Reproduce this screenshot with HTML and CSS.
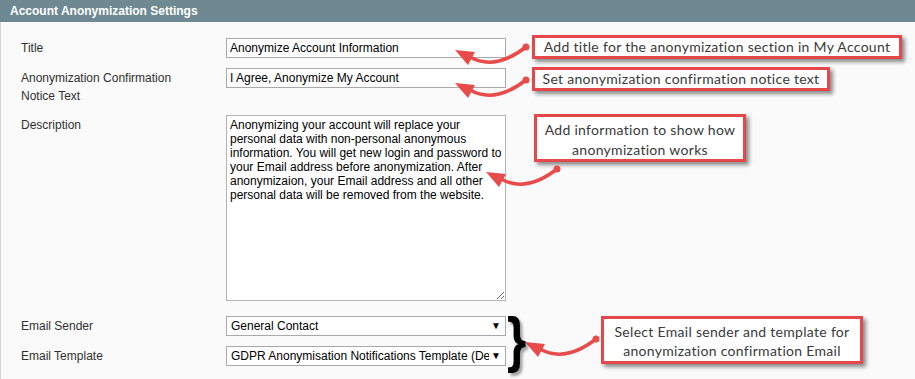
FILE: index.html
```html
<!DOCTYPE html>
<html lang="en">
<head>
  <meta charset="UTF-8" />
  <title>Account Anonymization Settings</title>
  <link rel="stylesheet" href="styles.css">
</head>
<body>

<div class="page">
  <div class="section-head">Account Anonymization Settings</div>

  <div class="section-body">
    <div class="row">
      <label>Title</label>
      <input type="text" class="field" value="Anonymize Account Information" />
    </div>

    <div class="row">
      <label>Anonymization Confirmation Notice Text</label>
      <input type="text" class="field" value="I Agree, Anonymize My Account" />
    </div>

    <div class="row row-area">
      <label>Description</label>
      <textarea class="area">Anonymizing your account will replace your personal data with non-personal anonymous information. You will get new login and password to your Email address before anonymization. After anonymizaion, your Email address and all other personal data will be removed from the website.</textarea>
    </div>

    <div class="row">
      <label>Email Sender</label>
      <div class="select-wrap">
        <select class="select">
          <option>General Contact</option>
        </select>
      </div>
    </div>

    <div class="row">
      <label>Email Template</label>
      <div class="select-wrap">
        <select class="select">
          <option>GDPR Anonymisation Notifications Template (Default)</option>
        </select>
      </div>
    </div>
  </div>

  <!-- Annotations -->
  <div class="callout c1">Add title for the anonymization section in My Account</div>
  <div class="callout c2">Set anonymization confirmation notice text</div>
  <div class="callout c3">Add information to show how<br>anonymization works</div>
  <div class="callout c4">Select Email sender and template for<br>anonymization confirmation Email</div>

  <svg class="arrow a1" width="80" height="30" viewBox="0 0 80 30">
    <path d="M20 17 Q45 31 76 7" fill="none" stroke="#e84c4a" stroke-width="3.5" stroke-linecap="round" />
    <polygon points="5,10 25,12 18,25" fill="#e84c4a" />
    <circle cx="76" cy="7" r="3.5" fill="#e84c4a" />
  </svg>
  <svg class="arrow a2" width="80" height="30" viewBox="0 0 80 30">
    <path d="M20 17 Q45 31 76 7" fill="none" stroke="#e84c4a" stroke-width="3.5" stroke-linecap="round" />
    <polygon points="5,10 25,12 18,25" fill="#e84c4a" />
    <circle cx="76" cy="7" r="3.5" fill="#e84c4a" />
  </svg>
  <svg class="arrow a3" width="80" height="30" viewBox="0 0 80 30">
    <path d="M20 17 Q45 31 76 7" fill="none" stroke="#e84c4a" stroke-width="3.5" stroke-linecap="round" />
    <polygon points="5,10 25,12 18,25" fill="#e84c4a" />
    <circle cx="76" cy="7" r="3.5" fill="#e84c4a" />
  </svg>
  <svg class="arrow a4" width="80" height="30" viewBox="0 0 80 30">
    <path d="M20 17 Q45 31 76 7" fill="none" stroke="#e84c4a" stroke-width="3.5" stroke-linecap="round" />
    <polygon points="5,10 25,12 18,25" fill="#e84c4a" />
    <circle cx="76" cy="7" r="3.5" fill="#e84c4a" />
  </svg>

  <div class="brace">}</div>
</div>

</body>
</html>
```

FILE: styles.css
```css
body {
  margin: 0;
  background: #fafafa;
  font-family: "Liberation Sans", Arial, sans-serif;
  font-size: 12px;
  color: #303030;
}

.page {
  position: relative;
  height: 379px;
  overflow: hidden;
}

.section-head {
  background: #6f8992;
  color: #fff;
  font-weight: bold;
  height: 22px;
  line-height: 22px;
  padding-left: 10px;
}

.section-body {
  border-left: 1px solid #d6d6d6;
  padding: 16px 0 0 20px;
  height: 341px;
}

.row {
  display: flex;
  align-items: flex-start;
  margin-bottom: 10px;
}

.row label {
  width: 160px;
  margin-right: 45px;
  flex: none;
  line-height: 18px;
  padding-top: 1px;
}

.row-area {
  margin-bottom: 15px;
}

.field {
  box-sizing: border-box;
  width: 280px;
  height: 20px;
  margin: 0;
  padding: 0 3px;
  border: 1px solid #a9a9a9;
  background: #fff;
  font-family: "Liberation Sans", Arial, sans-serif;
  font-size: 12px;
  color: #000;
  outline: none;
}

.area {
  box-sizing: border-box;
  width: 280px;
  height: 186px;
  margin: 0;
  padding: 2px 3px;
  border: 1px solid #b4b4b4;
  background: #fff;
  font-family: "Liberation Sans", Arial, sans-serif;
  font-size: 12px;
  line-height: 14px;
  color: #000;
  outline: none;
}

.select-wrap {
  position: relative;
  width: 280px;
}

.select-wrap::after {
  content: "▼";
  position: absolute;
  right: 5px;
  top: 4px;
  font-size: 10px;
  line-height: 12px;
  color: #000;
  pointer-events: none;
}

.select {
  -webkit-appearance: none;
  appearance: none;
  box-sizing: border-box;
  width: 280px;
  height: 20px;
  margin: 0;
  padding: 0 16px 0 4px;
  border: 1px solid #a9a9a9;
  border-radius: 0;
  background: #fff;
  font-family: "Liberation Sans", Arial, sans-serif;
  font-size: 12px;
  color: #000;
  outline: none;
}

.callout {
  position: absolute;
  box-sizing: border-box;
  background: #fff;
  border: 3px solid #e5484b;
  box-shadow: 3px 3px 4px rgba(0, 0, 0, 0.45);
  font-family: Lato, "Open Sans", sans-serif;
  font-size: 14px;
  letter-spacing: 0.3px;
  line-height: 18px;
  color: #3a3a3a;
  text-align: center;
  white-space: nowrap;
}

.c1 { left: 532px; top: 35px; width: 370px; height: 24px; }
.c2 { left: 532px; top: 67px; width: 298px; height: 24px; }
.c3 { left: 534px; top: 114px; width: 212px; height: 48px; padding-top: 3px; line-height: 20px; }
.c4 { left: 601px; top: 316px; width: 262px; height: 48px; padding-top: 3px; line-height: 19px; }

.arrow {
  position: absolute;
}

.a1 { left: 450px; top: 40px; }
.a2 { left: 450px; top: 73px; }
.a3 { left: 481px; top: 162px; }
.a4 { left: 520px; top: 332px; }

.brace {
  position: absolute;
  left: 507px;
  top: 306px;
  font-family: "Liberation Sans", Arial, sans-serif;
  font-weight: bold;
  font-size: 62px;
  line-height: 66px;
  color: #000;
  transform: scaleX(0.8);
  transform-origin: left top;
  text-shadow: 3px 3px 3px rgba(0, 0, 0, 0.35);
}
```
